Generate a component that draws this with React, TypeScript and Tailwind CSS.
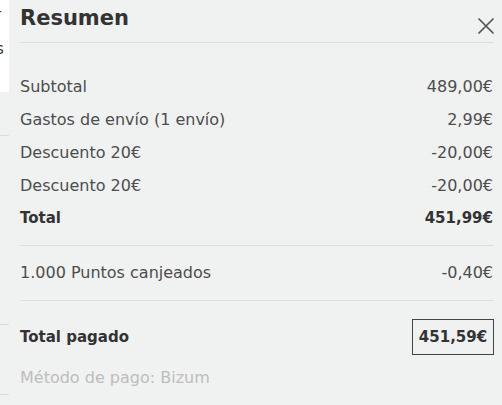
export default function App() {
  const rows = [
    { label: "Subtotal", value: "489,00€" },
    { label: "Gastos de envío (1 envío)", value: "2,99€" },
    { label: "Descuento 20€", value: "-20,00€" },
    { label: "Descuento 20€", value: "-20,00€" },
  ];

  return (
    <div className="w-[502px] h-[405px] bg-[#f0f1f1] flex overflow-hidden font-['DejaVu_Sans',sans-serif]">
      {/* Background page peeking at the left */}
      <div className="w-[9px] shrink-0 flex flex-col">
        <div className="h-[92px] bg-white relative overflow-hidden text-[15px] text-[#333]">
          <span className="absolute left-[-5px] top-[4px]">r</span>
          <span className="absolute left-[-4px] top-[38px]">s</span>
        </div>
        <div className="h-px bg-[#dcdcdc] mt-[43px]" />
        <div className="h-px bg-[#dcdcdc] mt-[188px]" />
        <div className="h-px bg-[#dcdcdc] mt-[69px]" />
      </div>

      {/* Summary panel */}
      <div className="flex-1 pl-[11px] pr-[8px] text-[#4d4d4d]">
        <div className="h-[43px] border-b border-[#dedede] flex justify-between items-start">
          <h2 className="pt-[4px] text-[21px] leading-[28px] font-bold text-[#333]">Resumen</h2>
          <svg width="16" height="16" viewBox="0 0 16 16" className="mt-[18px]">
            <path d="M1 1L15 15M15 1L1 15" stroke="#555" strokeWidth="1.7" strokeLinecap="round" />
          </svg>
        </div>

        <div className="pt-[27px] text-[16px]">
          {rows.map((r, i) => (
            <div key={i} className="h-[33px] flex items-center justify-between">
              <span>{r.label}</span>
              <span className="pr-[1px]">{r.value}</span>
            </div>
          ))}
          <div className="h-[33px] flex items-center justify-between font-bold text-[15px] text-[#333]">
            <span>Total</span>
            <span className="pr-[1px]">451,99€</span>
          </div>
        </div>

        <div className="mt-[10px] border-t border-[#dedede]" />
        <div className="h-[54px] flex items-center justify-between text-[16px]">
          <span>1.000 Puntos canjeados</span>
          <span className="pr-[1px]">-0,40€</span>
        </div>
        <div className="border-t border-[#dedede]" />

        <div className="mt-[18px] flex items-center justify-between text-[15px] font-bold text-[#333]">
          <span>Total pagado</span>
          <span className="w-[82px] h-[36px] border border-[#444] flex items-center justify-center">451,59€</span>
        </div>
        <div className="mt-[11px] text-[16px] text-[#bdbdbd]">Método de pago: Bizum</div>
      </div>
    </div>
  );
}
